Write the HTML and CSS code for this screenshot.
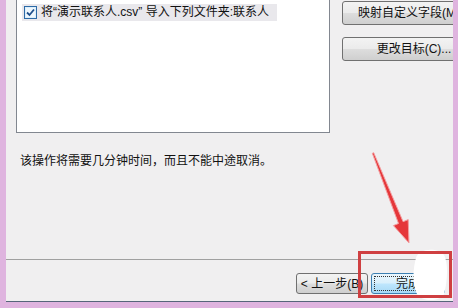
FILE: index.html
```html
<!DOCTYPE html>
<html lang="zh-CN">
<head>
    <meta charset="UTF-8">
    <meta name="viewport" content="width=device-width, initial-scale=1.0">
    <title>导入文件</title>
    <link rel="stylesheet" href="styles.css">
</head>
<body>
    <div class="window">
        <div class="top">
            <div class="listbox">
                <div class="item">
                    <svg class="check" width="13" height="13" viewBox="0 0 13 13">
                        <rect x="0.5" y="0.5" width="12" height="12" fill="#dbeefb" stroke="#2d6aa6"/>
                        <rect x="2" y="2" width="9" height="9" fill="#eef7fd"/>
                        <path d="M3 6.5 L5.5 9 L10 3.5" fill="none" stroke="#1e4f8c" stroke-width="1.8"/>
                    </svg>
                    <span>将“演示联系人.csv” 导入下列文件夹:联系人</span>
                </div>
            </div>
            <div class="side">
                <button class="btn wide">映射自定义字段(M)...</button>
                <button class="btn wide">更改目标(C)...</button>
            </div>
        </div>

        <p class="note">该操作将需要几分钟时间，而且不能中途取消。</p>

        <div class="sep"></div>

        <div class="footer">
            <button class="btn back">&lt; 上一步(B)</button>
            <button class="btn default"><span class="focus">完成</span></button>
        </div>
    </div>

    <!-- red marks drawn on top of the screenshot -->
    <svg class="annot" width="458" height="308" viewBox="0 0 458 308">
        <path d="M416 258 C418 248 438 247 444 255 C449 264 447 285 444 294 C440 302 422 302 417 294 C412 284 413 268 416 258 Z" fill="#ffffff"/>
        <polygon points="372.3,153.3 373.7,152.7 403.1,221.7 408.2,219.6 409,243 393.4,225.6 398.5,223.5"
                 fill="#e5373a" stroke="#f4a0a2" stroke-width="1" stroke-linejoin="round"/>
        <rect x="359.5" y="252.5" width="91" height="44" fill="none" stroke="#cf3f41" stroke-width="3"/>
    </svg>
</body>
</html>
```

FILE: styles.css
```css
body {
    margin: 0;
    background: #dfb4df;
    font-family: "Liberation Sans", "Noto Sans CJK SC", sans-serif;
    font-size: 12px;
    color: #111;
    overflow: hidden;
}
.window {
    position: relative;
    margin-left: 6px;
    width: 447px;
    height: 301px;
    background: #f0eff0;
    border-bottom: 1px solid #56657a;
    box-shadow: 0 3px 0 #cbd9ec;
    overflow: hidden;
}
.top {
    display: flex;
    margin-top: -10px;
}
.listbox {
    box-sizing: border-box;
    flex: none;
    margin-left: 10px;
    width: 314px;
    height: 143px;
    border: 1px solid #828790;
    background: #fff;
    padding: 13px 0 0 5px;
}
.item {
    display: flex;
    align-items: center;
    width: 255px;
    height: 17px;
    background: #e9e8ec;
    line-height: 17px;
    white-space: nowrap;
}
.check {
    margin: 0 4px 0 2px;
    flex: none;
}
.side {
    display: flex;
    flex: none;
    flex-direction: column;
    gap: 12px;
    margin-left: 12px;
    padding-top: 11px;
}
.btn {
    box-sizing: border-box;
    font-family: inherit;
    font-size: 12px;
    color: #111;
    border: 1px solid #707070;
    border-radius: 3px;
    background: linear-gradient(#f3f3f3 0%, #ebebeb 48%, #dddddd 52%, #cfcfcf 100%);
    padding: 0;
    white-space: nowrap;
    line-height: 1;
}
.wide {
    width: 144px;
    height: 24px;
}
.note {
    margin: 20px 0 0 14px;
    line-height: 16px;
}
.sep {
    margin-top: 90px;
    height: 1px;
    background: #a0a0a0;
}
.footer {
    display: flex;
    justify-content: flex-end;
    gap: 3px;
    margin-top: 13px;
    padding-right: 8px;
}
.footer .btn {
    height: 21px;
}
.back {
    width: 72px;
}
.default {
    width: 74px;
    border-color: #3c7fb1;
    background: linear-gradient(#eaf6fd 0%, #d9f0fc 48%, #bee6fd 52%, #a7d9f5 100%);
    padding: 2px;
}
.focus {
    display: flex;
    align-items: center;
    justify-content: center;
    height: 100%;
    border: 1px dotted #333;
    box-sizing: border-box;
}
.annot {
    position: absolute;
    top: 0;
    left: 0;
    pointer-events: none;
}
```
